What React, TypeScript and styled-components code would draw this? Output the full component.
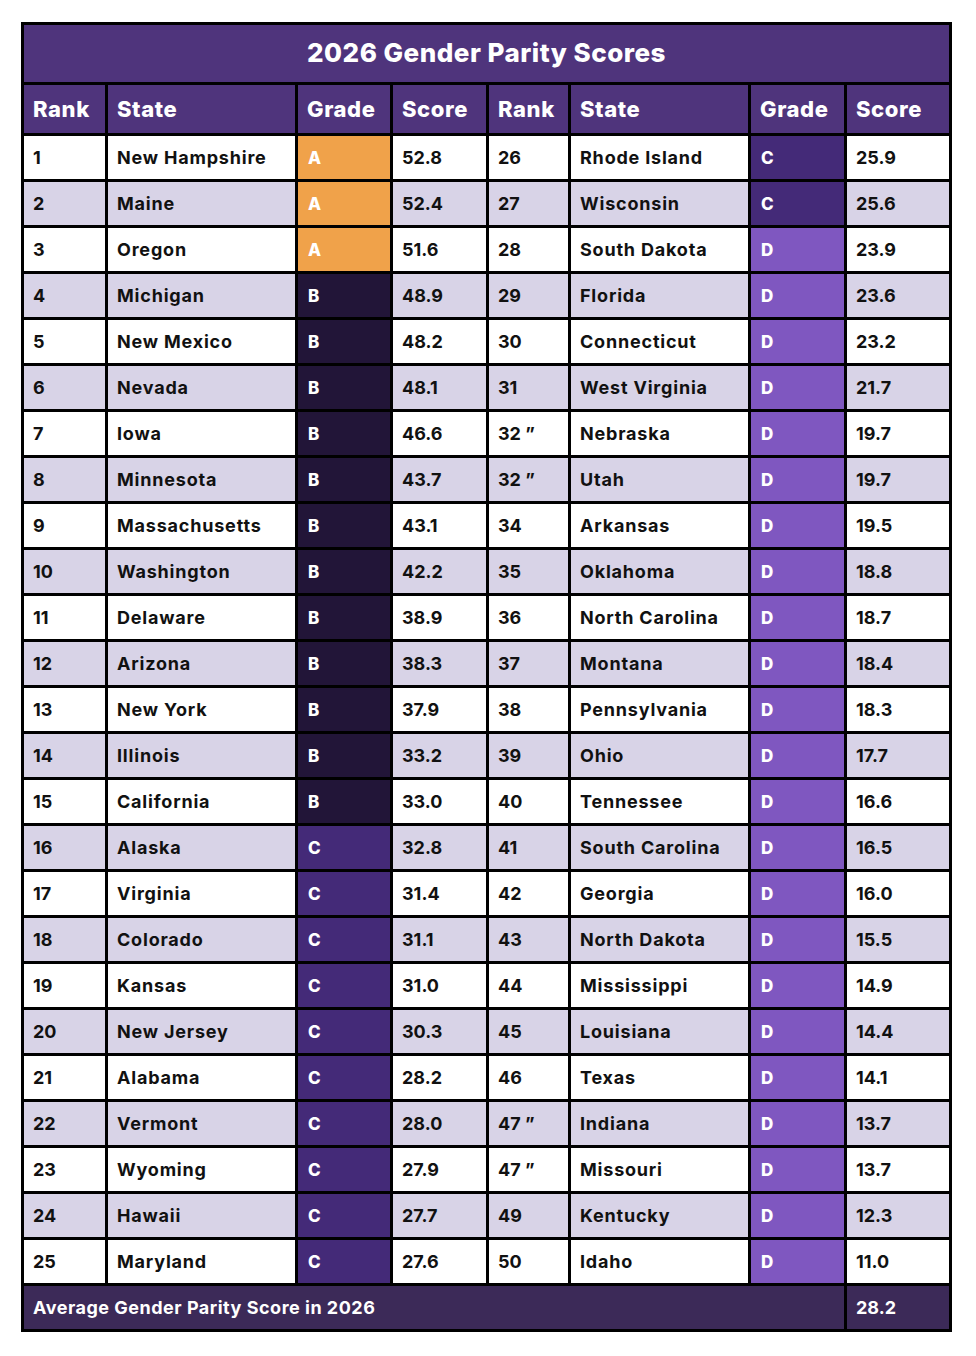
import React from "react";
import styled, { createGlobalStyle, css } from "styled-components";

const Global = createGlobalStyle`
  html, body { margin: 0; padding: 0; background: #ffffff; }
  body { font-family: Inter, "Noto Sans", "DejaVu Sans", sans-serif; }
`;

type Grade = "A" | "B" | "C" | "D";
type Row = { rank: string; state: string; grade: Grade; score: string };

const left: Row[] = [
  { rank: "1", state: "New Hampshire", grade: "A", score: "52.8" },
  { rank: "2", state: "Maine", grade: "A", score: "52.4" },
  { rank: "3", state: "Oregon", grade: "A", score: "51.6" },
  { rank: "4", state: "Michigan", grade: "B", score: "48.9" },
  { rank: "5", state: "New Mexico", grade: "B", score: "48.2" },
  { rank: "6", state: "Nevada", grade: "B", score: "48.1" },
  { rank: "7", state: "Iowa", grade: "B", score: "46.6" },
  { rank: "8", state: "Minnesota", grade: "B", score: "43.7" },
  { rank: "9", state: "Massachusetts", grade: "B", score: "43.1" },
  { rank: "10", state: "Washington", grade: "B", score: "42.2" },
  { rank: "11", state: "Delaware", grade: "B", score: "38.9" },
  { rank: "12", state: "Arizona", grade: "B", score: "38.3" },
  { rank: "13", state: "New York", grade: "B", score: "37.9" },
  { rank: "14", state: "Illinois", grade: "B", score: "33.2" },
  { rank: "15", state: "California", grade: "B", score: "33.0" },
  { rank: "16", state: "Alaska", grade: "C", score: "32.8" },
  { rank: "17", state: "Virginia", grade: "C", score: "31.4" },
  { rank: "18", state: "Colorado", grade: "C", score: "31.1" },
  { rank: "19", state: "Kansas", grade: "C", score: "31.0" },
  { rank: "20", state: "New Jersey", grade: "C", score: "30.3" },
  { rank: "21", state: "Alabama", grade: "C", score: "28.2" },
  { rank: "22", state: "Vermont", grade: "C", score: "28.0" },
  { rank: "23", state: "Wyoming", grade: "C", score: "27.9" },
  { rank: "24", state: "Hawaii", grade: "C", score: "27.7" },
  { rank: "25", state: "Maryland", grade: "C", score: "27.6" },
];

const right: Row[] = [
  { rank: "26", state: "Rhode Island", grade: "C", score: "25.9" },
  { rank: "27", state: "Wisconsin", grade: "C", score: "25.6" },
  { rank: "28", state: "South Dakota", grade: "D", score: "23.9" },
  { rank: "29", state: "Florida", grade: "D", score: "23.6" },
  { rank: "30", state: "Connecticut", grade: "D", score: "23.2" },
  { rank: "31", state: "West Virginia", grade: "D", score: "21.7" },
  { rank: "32 \u201d", state: "Nebraska", grade: "D", score: "19.7" },
  { rank: "32 \u201d", state: "Utah", grade: "D", score: "19.7" },
  { rank: "34", state: "Arkansas", grade: "D", score: "19.5" },
  { rank: "35", state: "Oklahoma", grade: "D", score: "18.8" },
  { rank: "36", state: "North Carolina", grade: "D", score: "18.7" },
  { rank: "37", state: "Montana", grade: "D", score: "18.4" },
  { rank: "38", state: "Pennsylvania", grade: "D", score: "18.3" },
  { rank: "39", state: "Ohio", grade: "D", score: "17.7" },
  { rank: "40", state: "Tennessee", grade: "D", score: "16.6" },
  { rank: "41", state: "South Carolina", grade: "D", score: "16.5" },
  { rank: "42", state: "Georgia", grade: "D", score: "16.0" },
  { rank: "43", state: "North Dakota", grade: "D", score: "15.5" },
  { rank: "44", state: "Mississippi", grade: "D", score: "14.9" },
  { rank: "45", state: "Louisiana", grade: "D", score: "14.4" },
  { rank: "46", state: "Texas", grade: "D", score: "14.1" },
  { rank: "47 \u201d", state: "Indiana", grade: "D", score: "13.7" },
  { rank: "47 \u201d", state: "Missouri", grade: "D", score: "13.7" },
  { rank: "49", state: "Kentucky", grade: "D", score: "12.3" },
  { rank: "50", state: "Idaho", grade: "D", score: "11.0" },
];

const gradeColors: Record<Grade, string> = {
  A: "#f0a24a",
  B: "#221538",
  C: "#442a78",
  D: "#7f57c0",
};

const Page = styled.div`
  padding: 22px 0 0 21px;
`;

const Table = styled.div`
  display: grid;
  width: 931px;
  box-sizing: border-box;
  grid-template-columns: 81px 187px 92px 93px 79px 177px 93px 102px;
  grid-template-rows: 57px 48px repeat(25, 43px) 43px;
  gap: 3px;
  padding: 3px;
  background: #000000;
`;

const cellBase = css`
  display: flex;
  align-items: center;
  padding-left: 9px;
  font-weight: 700;
  white-space: nowrap;
  overflow: hidden;
`;

const Title = styled.div`
  grid-column: 1 / -1;
  display: flex;
  align-items: center;
  justify-content: center;
  padding-bottom: 2px;
  background: #4f347c;
  color: #ffffff;
  font-size: 26px;
  font-weight: 800;
  letter-spacing: 0.5px;
`;

const HeaderCell = styled.div`
  ${cellBase};
  background: #4f347c;
  color: #ffffff;
  font-size: 22px;
  font-weight: 800;
  letter-spacing: 0.6px;
`;

const Cell = styled.div<{ $alt: boolean; $num?: boolean }>`
  ${cellBase};
  background: ${(p) => (p.$alt ? "#d8d3e7" : "#ffffff")};
  color: #111111;
  font-size: 18px;
  letter-spacing: ${(p) => (p.$num ? "0" : "0.8px")};
`;

const GradeCell = styled.div<{ $grade: Grade }>`
  ${cellBase};
  padding-left: 10px;
  background: ${(p) => gradeColors[p.$grade]};
  color: #ffffff;
  font-size: 17px;
  font-weight: 800;
`;

const FooterLabel = styled.div`
  ${cellBase};
  grid-column: 1 / span 7;
  background: #3c2a58;
  color: #ffffff;
  font-size: 18px;
  letter-spacing: 0.5px;
`;

const FooterValue = styled.div`
  ${cellBase};
  background: #3c2a58;
  color: #ffffff;
  font-size: 18px;
`;

const headers = ["Rank", "State", "Grade", "Score", "Rank", "State", "Grade", "Score"];

function RowCells({ row, alt }: { row: Row; alt: boolean }) {
  return (
    <>
      <Cell $alt={alt} $num>
        {row.rank}
      </Cell>
      <Cell $alt={alt}>{row.state}</Cell>
      <GradeCell $grade={row.grade}>{row.grade}</GradeCell>
      <Cell $alt={alt} $num>
        {row.score}
      </Cell>
    </>
  );
}

export default function App() {
  return (
    <Page>
      <Global />
      <Table>
        <Title>2026 Gender Parity Scores</Title>
        {headers.map((h, i) => (
          <HeaderCell key={i}>{h}</HeaderCell>
        ))}
        {left.map((l, i) => (
          <React.Fragment key={i}>
            <RowCells row={l} alt={i % 2 === 1} />
            <RowCells row={right[i]} alt={i % 2 === 1} />
          </React.Fragment>
        ))}
        <FooterLabel>Average Gender Parity Score in 2026</FooterLabel>
        <FooterValue>28.2</FooterValue>
      </Table>
    </Page>
  );
}
